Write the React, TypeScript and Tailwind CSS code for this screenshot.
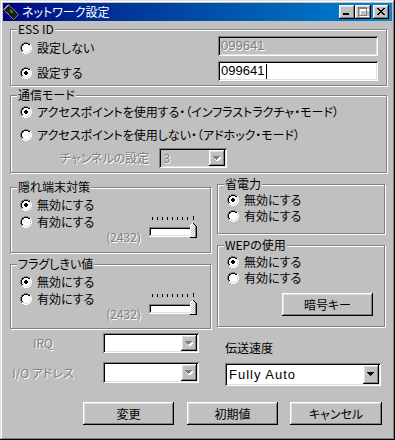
import React from "react";

// win98 style bevels
const raised =
  "shadow-[inset_-1px_-1px_#000,inset_1px_1px_#fff,inset_-2px_-2px_#808080,inset_2px_2px_#dfdfdf]";
const sunken =
  "shadow-[inset_1px_1px_#808080,inset_-1px_-1px_#fff,inset_2px_2px_#000,inset_-2px_-2px_#dfdfdf]";
const dim = "text-[#808080] [text-shadow:1px_1px_0_#fff]";

const COLORS: Record<string, string> = {
  g: "#808080",
  k: "#000000",
  w: "#ffffff",
  l: "#dfdfdf",
};

const RADIO_RING = [
  "....gggg....",
  "..ggkkkkgg..",
  ".gkkwwwwkkw.",
  ".gkwwwwwwlw.",
  "gkwwwwwwwwlw",
  "gkwwwwwwwwlw",
  "gkwwwwwwwwlw",
  "gkwwwwwwwwlw",
  ".gkwwwwwwlw.",
  ".gllwwwwllw.",
  "..wwllllww..",
  "....wwww....",
];

function RadioIcon({ checked }: { checked?: boolean }) {
  const rects: React.ReactElement[] = [];
  RADIO_RING.forEach((row, y) =>
    row.split("").forEach((c, x) => {
      if (c !== ".")
        rects.push(<rect key={`${x}-${y}`} x={x} y={y} width={1} height={1} fill={COLORS[c]} />);
    })
  );
  return (
    <svg width="12" height="12" viewBox="0 0 12 12" shapeRendering="crispEdges" className="shrink-0">
      {rects}
      {checked && (
        <g fill="#000">
          <rect x="5" y="4" width="2" height="1" />
          <rect x="4" y="5" width="4" height="2" />
          <rect x="5" y="7" width="2" height="1" />
        </g>
      )}
    </svg>
  );
}

function Radio({ label, checked, className = "" }: { label: string; checked?: boolean; className?: string }) {
  return (
    <div className={`flex items-center h-[16px] ${className}`}>
      <RadioIcon checked={checked} />
      <span className="ml-[5px] whitespace-nowrap">{label}</span>
    </div>
  );
}

function GroupBox({ label, className = "", children }: { label: string; className?: string; children?: React.ReactNode }) {
  return (
    <div className={`relative border border-[#808080] shadow-[1px_1px_0_#fff,inset_1px_1px_0_#fff] ${className}`}>
      <span className="absolute left-[6px] top-[-8px] bg-[#c0c0c0] px-[1px] whitespace-nowrap">{label}</span>
      {children}
    </div>
  );
}

function Arrow({ disabled }: { disabled?: boolean }) {
  return (
    <svg width="8" height="5" viewBox="0 0 8 5" shapeRendering="crispEdges">
      {disabled && <path d="M2 1h7v1h-1v1h-1v1h-1v1h-1v1h-1v-1h-1v-1h-1z" fill="#fff" />}
      <path d="M0 0h7v1h-1v1h-1v1h-1v1h-1v-1h-1v-1h-1v-1h-1z" fill={disabled ? "#808080" : "#000"} />
    </svg>
  );
}

function Combo({
  value,
  className = "",
  gray,
  disabled,
}: {
  value?: string;
  className?: string;
  gray?: boolean;
  disabled?: boolean;
}) {
  return (
    <div className={`flex p-[2px] ${sunken} ${gray ? "bg-[#c0c0c0]" : "bg-white"} ${className}`}>
      <div className={`flex-1 flex items-center pl-[2px] ${disabled ? dim : ""}`}>{value}</div>
      <div className={`w-[16px] bg-[#c0c0c0] flex items-center justify-center ${raised}`}>
        <Arrow disabled={disabled} />
      </div>
    </div>
  );
}

function Button({ label, className = "" }: { label: string; className?: string }) {
  return (
    <div className={`h-[23px] flex items-center justify-center bg-[#c0c0c0] ${raised} ${className}`}>
      {label}
    </div>
  );
}

function Slider() {
  const ticks = [3, 8, 13, 18, 23, 28, 33, 38, 44];
  return (
    <svg width="49" height="24" viewBox="0 0 49 24" shapeRendering="crispEdges" className="shrink-0">
      <defs>
        <pattern id="dither" width="2" height="2" patternUnits="userSpaceOnUse">
          <rect width="2" height="2" fill="#c0c0c0" />
          <rect width="1" height="1" fill="#fff" />
          <rect x="1" y="1" width="1" height="1" fill="#fff" />
        </pattern>
      </defs>
      {ticks.map((x, i) => (
        <rect key={x} x={x} y={i === ticks.length - 1 ? 1 : 2} width="1" height={i === ticks.length - 1 ? 4 : 3} fill="#000" />
      ))}
      {/* track */}
      <rect x="0" y="12" width="47" height="10" fill="#fff" />
      <rect x="0" y="12" width="46" height="1" fill="#808080" />
      <rect x="0" y="12" width="1" height="9" fill="#808080" />
      <rect x="1" y="13" width="44" height="1" fill="#000" />
      <rect x="1" y="13" width="1" height="7" fill="#000" />
      <rect x="1" y="20" width="45" height="1" fill="#dfdfdf" />
      <rect x="0" y="21" width="47" height="1" fill="#fff" />
      {/* thumb */}
      <path d="M41 11l3-3 3 3v11h-6z" fill="url(#dither)" />
      <path d="M41 22v-11l3-3" fill="none" stroke="#fff" strokeWidth="1" />
      <path d="M44 8l3 3v11h-6" fill="none" stroke="#000" strokeWidth="1" />
      <rect x="46" y="11" width="1" height="11" fill="#808080" />
    </svg>
  );
}

function SliderBox({ label, className = "" }: { label: string; className?: string }) {
  return (
    <GroupBox label={label} className={className}>
      <div className="flex pt-[9px] pl-[9px] pr-[12px]">
        <div className="flex flex-col gap-[1px]">
          <Radio label="無効にする" checked />
          <Radio label="有効にする" />
        </div>
        <div className="flex items-start ml-auto gap-[8px]">
          <span className={`mt-[33px] ${dim}`}>(2432)</span>
          <div className="mt-[18px]">
            <Slider />
          </div>
        </div>
      </div>
    </GroupBox>
  );
}

function TitleBar() {
  return (
    <div className="h-[18px] flex items-center bg-linear-to-r from-[#000080] to-[#1084d0] pr-[3px]">
      <svg width="16" height="16" viewBox="0 0 16 16" className="shrink-0">
        <path d="M0.5 5.5l5-5 10 10-5 5z" fill="#1a1a1a" stroke="#808080" />
        <path d="M1 5.5l4.5-4.5" stroke="#fff" />
        <path d="M7 6l3 3" stroke="#2f8f2f" strokeWidth="2" />
        <path d="M4 8l2 2" stroke="#606060" strokeWidth="1" />
      </svg>
      <span className="ml-[3px] text-white whitespace-nowrap">ネットワーク設定</span>
      <div className="ml-auto flex">
        <div className={`w-[16px] h-[14px] bg-[#c0c0c0] relative ${raised}`}>
          <div className="absolute left-[4px] top-[8px] w-[6px] h-[2px] bg-black" />
        </div>
        <div className={`w-[16px] h-[14px] bg-[#c0c0c0] relative ${raised}`}>
          <svg width="16" height="14" viewBox="0 0 16 14" shapeRendering="crispEdges" className="absolute left-0 top-0">
            <path d="M4 3h9v1h-8v6h8v1h-9z M4 3h9v2h-9z" fill="#fff" transform="translate(1 1)" />
            <path d="M3 2h9v9h-9z M4 4v6h7v-6z" fill="#808080" fillRule="evenodd" />
          </svg>
        </div>
        <div className={`ml-[2px] w-[16px] h-[14px] bg-[#c0c0c0] relative ${raised}`}>
          <svg width="16" height="14" viewBox="0 0 16 14" shapeRendering="crispEdges" className="absolute left-0 top-0">
            <path
              d="M4 3h2v1h1v1h2v-1h1v-1h2v1h-1v1h-1v1h-1v1h1v1h1v1h1v1h-2v-1h-1v-1h-2v1h-1v1h-2v-1h1v-1h1v-1h1v-1h-1v-1h-1v-1h-1z"
              fill="#000"
            />
          </svg>
        </div>
      </div>
    </div>
  );
}

export default function App() {
  return (
    <div
      className={`w-[395px] h-[440px] bg-[#c0c0c0] p-[3px] flex flex-col text-black text-[12px] leading-[14px] font-['Noto_Sans_CJK_JP',sans-serif] [font-feature-settings:'palt'] shadow-[inset_-1px_-1px_#000,inset_1px_1px_#dfdfdf,inset_-2px_-2px_#808080,inset_2px_2px_#fff]`}
    >
      <TitleBar />
      <div className="flex flex-col pl-[7px] pt-[8px]">
        {/* ESS ID */}
        <GroupBox label="ESS ID" className="w-[377px] h-[57px]">
          <div className="flex flex-col gap-[5px] pt-[6px] pl-[9px] pr-[8px]">
            <div className="flex items-start h-[20px]">
              <Radio label="設定しない" className="mt-[4px]" />
              <div className={`ml-auto w-[160px] h-[20px] flex items-center pl-[3px] bg-[#c0c0c0] ${sunken} font-['Liberation_Sans',sans-serif] text-[13px] ${dim}`}>
                099641
              </div>
            </div>
            <div className="flex items-start h-[20px]">
              <Radio label="設定する" checked className="mt-[4px]" />
              <div className={`ml-auto w-[160px] h-[20px] flex items-center pl-[3px] bg-white ${sunken} font-['Liberation_Sans',sans-serif] text-[13px]`}>
                099641
                <span className="ml-[2px] w-[1px] h-[15px] bg-black" />
              </div>
            </div>
          </div>
        </GroupBox>

        {/* 通信モード */}
        <GroupBox label="通信モード" className="w-[377px] h-[78px] mt-[9px]">
          <div className="flex flex-col pt-[8px] pl-[9px]">
            <Radio label="アクセスポイントを使用する・（インフラストラクチャ・モード）" checked />
            <Radio label="アクセスポイントを使用しない・（アドホック・モード）" className="mt-[7px]" />
            <div className="flex items-center mt-[5px] pl-[40px]">
              <span className={dim}>チャンネルの設定</span>
              <Combo value="3" gray disabled className="ml-[10px] w-[68px] h-[20px]" />
            </div>
          </div>
        </GroupBox>

        <div className="flex mt-[11px]">
          {/* left column */}
          <div className="flex flex-col w-[201px] mt-[3px]">
            <SliderBox label="隠れ端末対策" className="h-[66px]" />
            <SliderBox label="フラグしきい値" className="h-[65px] mt-[11px]" />
            <div className="flex items-center mt-[4px]">
              <span className={`w-[66px] text-center ${dim}`}>IRQ</span>
              <Combo disabled className="ml-[27px] w-[96px] h-[20px]" />
            </div>
            <div className="flex items-center mt-[9px]">
              <span className={`w-[66px] text-center ${dim}`}>I/O アドレス</span>
              <Combo disabled className="ml-[27px] w-[96px] h-[21px]" />
            </div>
          </div>

          {/* right column */}
          <div className="flex flex-col w-[168px] ml-[6px]">
            <GroupBox label="省電力" className="h-[50px]">
              <div className="flex flex-col pt-[7px] pl-[9px]">
                <Radio label="無効にする" checked />
                <Radio label="有効にする" />
              </div>
            </GroupBox>
            <GroupBox label="WEPの使用" className="h-[82px] mt-[11px]">
              <div className="flex flex-col pt-[8px] pl-[9px]">
                <Radio label="無効にする" checked />
                <Radio label="有効にする" />
                <Button label="暗号キー" className="w-[91px] self-end mr-[11px] mt-[7px]" />
              </div>
            </GroupBox>
            <span className="mt-[14px] pl-[8px]">伝送速度</span>
            <Combo
              value="Fully Auto"
              className="mt-[8px] ml-[8px] w-[156px] h-[23px] font-['Liberation_Sans',sans-serif] text-[13px] tracking-[1px]"
            />
          </div>
        </div>

        {/* buttons */}
        <div className="flex mt-[16px] ml-[73px] gap-[13px]">
          <Button label="変更" className="w-[91px]" />
          <Button label="初期値" className="w-[91px]" />
          <Button label="キャンセル" className="w-[92px] -ml-[1px]" />
        </div>
      </div>
    </div>
  );
}
